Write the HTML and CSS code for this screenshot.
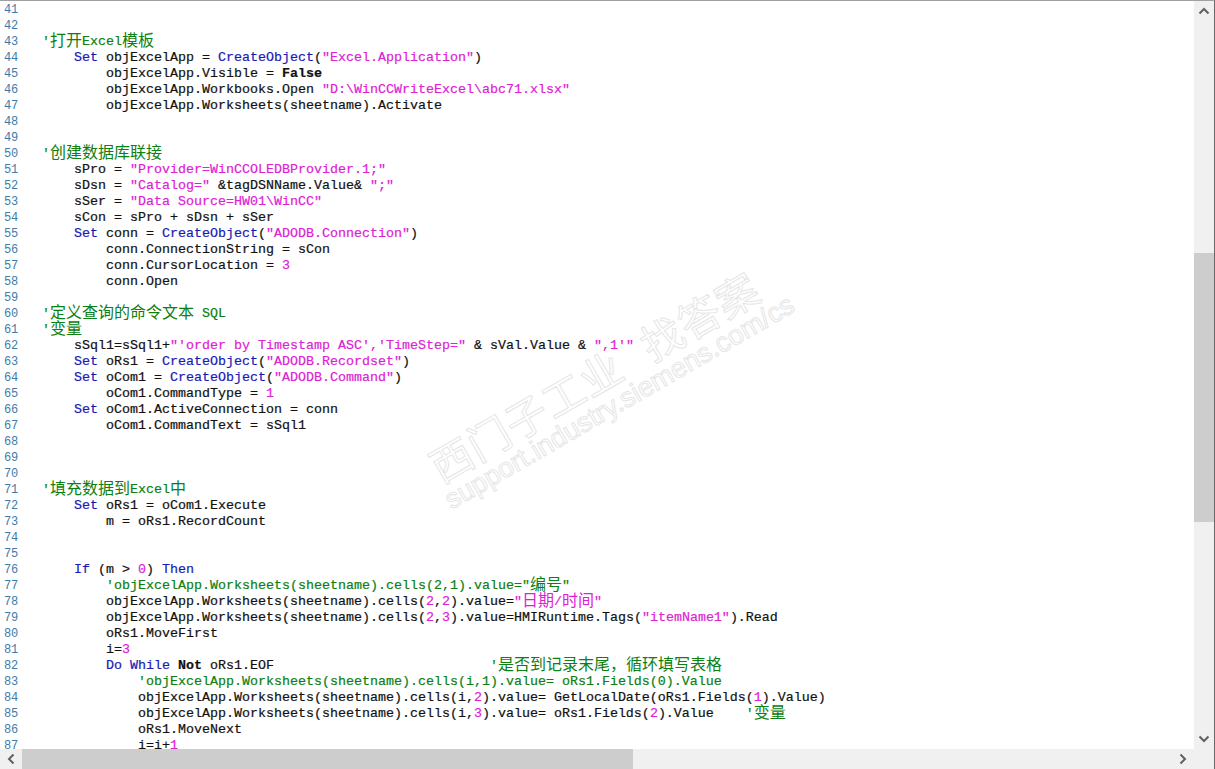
FILE: index.html
```html
<!DOCTYPE html>
<html lang="zh">
<head>
<meta charset="utf-8">
<title>Script</title>
<link rel="stylesheet" href="styles.css">
</head>
<body>
<div class="window">
  <div class="main">
    <div class="viewport">
      <div class="code">
        <div class="line"><span class="num">41</span><span class="src"></span></div>
        <div class="line"><span class="num">42</span><span class="src"></span></div>
        <div class="line"><span class="num">43</span><span class="src"><i class="c">'<b class="z">打开</b>Excel<b class="z">模板</b></i></span></div>
        <div class="line"><span class="num">44</span><span class="src">    <i class="k">Set</i> objExcelApp = <i class="k">CreateObject</i>(<i class="s">"Excel.Application"</i>)</span></div>
        <div class="line"><span class="num">45</span><span class="src">        objExcelApp.Visible = <strong>False</strong></span></div>
        <div class="line"><span class="num">46</span><span class="src">        objExcelApp.Workbooks.Open <i class="s">"D:\WinCCWriteExcel\abc71.xlsx"</i></span></div>
        <div class="line"><span class="num">47</span><span class="src">        objExcelApp.Worksheets(sheetname).Activate</span></div>
        <div class="line"><span class="num">48</span><span class="src"></span></div>
        <div class="line"><span class="num">49</span><span class="src"></span></div>
        <div class="line"><span class="num">50</span><span class="src"><i class="c">'<b class="z">创建数据库联接</b></i></span></div>
        <div class="line"><span class="num">51</span><span class="src">    sPro = <i class="s">"Provider=WinCCOLEDBProvider.1;"</i></span></div>
        <div class="line"><span class="num">52</span><span class="src">    sDsn = <i class="s">"Catalog="</i> &amp;tagDSNName.Value&amp; <i class="s">";"</i></span></div>
        <div class="line"><span class="num">53</span><span class="src">    sSer = <i class="s">"Data Source=HW01\WinCC"</i></span></div>
        <div class="line"><span class="num">54</span><span class="src">    sCon = sPro + sDsn + sSer</span></div>
        <div class="line"><span class="num">55</span><span class="src">    <i class="k">Set</i> conn = <i class="k">CreateObject</i>(<i class="s">"ADODB.Connection"</i>)</span></div>
        <div class="line"><span class="num">56</span><span class="src">        conn.ConnectionString = sCon</span></div>
        <div class="line"><span class="num">57</span><span class="src">        conn.CursorLocation = <i class="s">3</i></span></div>
        <div class="line"><span class="num">58</span><span class="src">        conn.Open</span></div>
        <div class="line"><span class="num">59</span><span class="src"></span></div>
        <div class="line"><span class="num">60</span><span class="src"><i class="c">'<b class="z">定义查询的命令文本</b> SQL</i></span></div>
        <div class="line"><span class="num">61</span><span class="src"><i class="c">'<b class="z">变量</b></i></span></div>
        <div class="line"><span class="num">62</span><span class="src">    sSql1=sSql1+<i class="s">"'order by Timestamp ASC','TimeStep="</i> &amp; sVal.Value &amp; <i class="s">",1'"</i></span></div>
        <div class="line"><span class="num">63</span><span class="src">    <i class="k">Set</i> oRs1 = <i class="k">CreateObject</i>(<i class="s">"ADODB.Recordset"</i>)</span></div>
        <div class="line"><span class="num">64</span><span class="src">    <i class="k">Set</i> oCom1 = <i class="k">CreateObject</i>(<i class="s">"ADODB.Command"</i>)</span></div>
        <div class="line"><span class="num">65</span><span class="src">        oCom1.CommandType = <i class="s">1</i></span></div>
        <div class="line"><span class="num">66</span><span class="src">    <i class="k">Set</i> oCom1.ActiveConnection = conn</span></div>
        <div class="line"><span class="num">67</span><span class="src">        oCom1.CommandText = sSql1</span></div>
        <div class="line"><span class="num">68</span><span class="src"></span></div>
        <div class="line"><span class="num">69</span><span class="src"></span></div>
        <div class="line"><span class="num">70</span><span class="src"></span></div>
        <div class="line"><span class="num">71</span><span class="src"><i class="c">'<b class="z">填充数据到</b>Excel<b class="z">中</b></i></span></div>
        <div class="line"><span class="num">72</span><span class="src">    <i class="k">Set</i> oRs1 = oCom1.Execute</span></div>
        <div class="line"><span class="num">73</span><span class="src">        m = oRs1.RecordCount</span></div>
        <div class="line"><span class="num">74</span><span class="src"></span></div>
        <div class="line"><span class="num">75</span><span class="src"></span></div>
        <div class="line"><span class="num">76</span><span class="src">    <i class="k">If</i> (m &gt; <i class="s">0</i>) <i class="k">Then</i></span></div>
        <div class="line"><span class="num">77</span><span class="src">        <i class="c">'objExcelApp.Worksheets(sheetname).cells(2,1).value="<b class="z">编号</b>"</i></span></div>
        <div class="line"><span class="num">78</span><span class="src">        objExcelApp.Worksheets(sheetname).cells(<i class="s">2</i>,<i class="s">2</i>).value=<i class="s">"<b class="z">日期</b>/<b class="z">时间</b>"</i></span></div>
        <div class="line"><span class="num">79</span><span class="src">        objExcelApp.Worksheets(sheetname).cells(<i class="s">2</i>,<i class="s">3</i>).value=HMIRuntime.Tags(<i class="s">"itemName1"</i>).Read</span></div>
        <div class="line"><span class="num">80</span><span class="src">        oRs1.MoveFirst</span></div>
        <div class="line"><span class="num">81</span><span class="src">        i=<i class="s">3</i></span></div>
        <div class="line"><span class="num">82</span><span class="src">        <i class="k">Do While</i> <strong>Not</strong> oRs1.EOF                           <i class="c">'<b class="z">是否到记录末尾，循环填写表格</b></i></span></div>
        <div class="line"><span class="num">83</span><span class="src">            <i class="c">'objExcelApp.Worksheets(sheetname).cells(i,1).value= oRs1.Fields(0).Value</i></span></div>
        <div class="line"><span class="num">84</span><span class="src">            objExcelApp.Worksheets(sheetname).cells(i,<i class="s">2</i>).value= GetLocalDate(oRs1.Fields(<i class="s">1</i>).Value)</span></div>
        <div class="line"><span class="num">85</span><span class="src">            objExcelApp.Worksheets(sheetname).cells(i,<i class="s">3</i>).value= oRs1.Fields(<i class="s">2</i>).Value    <i class="c">'<b class="z">变量</b></i></span></div>
        <div class="line"><span class="num">86</span><span class="src">            oRs1.MoveNext</span></div>
        <div class="line"><span class="num">87</span><span class="src">            i=i+<i class="s">1</i></span></div>
      </div>
      <div class="watermark">
        <div class="wm-cn"><span class="wm-a">西门子工业</span><span>找答案</span></div>
        <div class="wm-en">support.industry.siemens.com/cs</div>
      </div>
    </div>
    <div class="vbar">
      <svg class="arrow" viewBox="0 0 12 8" aria-hidden="true"><path d="M1.500 6.500 6 2l4.500 4.500"/></svg>
      <div class="vtrack"><div class="vthumb"></div></div>
      <svg class="arrow" viewBox="0 0 12 8" aria-hidden="true"><path d="M1.500 1.500 6 6l4.500-4.500"/></svg>
    </div>
  </div>
  <div class="hbar">
    <svg class="arrow-h" viewBox="0 0 8 12" aria-hidden="true"><path d="M6.500 1.500 2 6l4.500 4.500"/></svg>
    <div class="htrack"><div class="hthumb"></div></div>
    <svg class="arrow-h" viewBox="0 0 8 12" aria-hidden="true"><path d="M1.500 1.500 6 6l-4.500 4.500"/></svg>
    <div class="corner"></div>
  </div>
</div>
</body>
</html>
```
FILE: styles.css
```css
* { box-sizing: border-box; }
html, body { margin: 0; height: 100%; background: #fff; overflow: hidden; }
.window {
  width: 1215px;
  height: 769px;
  display: flex;
  flex-direction: column;
  border-top: 1px solid #a0a0a0;
  border-right: 1px solid #696969;
}
.main { flex: 1; min-height: 0; display: flex; }
.viewport { flex: 1; min-width: 0; position: relative; overflow: hidden; background: #fff; }
.code {
  font-family: "Liberation Mono", "Noto Sans CJK SC", monospace;
  font-size: 13.33px;
  line-height: 16px;
  color: #111;
  padding-top: 1px;
}
.line { display: flex; height: 16px; }
.num { width: 42px; padding-left: 4px; color: #3f7ba8; font-size: 12px; letter-spacing: -0.2px; flex: none; }
.src { white-space: pre; -webkit-text-stroke: 0.2px currentColor; }
.src i { font-style: normal; }
.k { color: #1a1ab4; }
.s { color: #dc22d4; }
.c { color: #0c8012; }
.z { font-family: "Noto Sans CJK SC", sans-serif; font-size: 16px; font-weight: 400; line-height: 0; vertical-align: -1px; -webkit-text-stroke: 0; }
strong { font-weight: 700; }
.watermark {
  position: absolute;
  left: 454px;
  top: 441px;
  width: 400px;
  transform: rotate(-30deg);
  transform-origin: 0 100%;
  color: transparent;
  -webkit-text-stroke: 1px #e6e6e6;
  pointer-events: none;
}
.wm-cn {
  font-family: "Noto Sans CJK SC", sans-serif;
  font-size: 42px;
  line-height: 44px;
  letter-spacing: 1px;
  white-space: nowrap;
  padding-left: 4px;
  display: flex;
  gap: 28px;
}
.wm-en {
  font-family: "Liberation Sans", sans-serif;
  font-size: 27.500px;
  line-height: 28px;
  white-space: nowrap;
}
.vbar { width: 20px; flex: none; background: #f0f0f0; display: flex; flex-direction: column; align-items: center; }
.arrow { width: 12px; height: 8px; margin: 6px 0; flex: none; fill: none; stroke: #606060; stroke-width: 2; }
.vtrack { flex: 1; width: 100%; padding-top: 232px; }
.vthumb { height: 269px; background: #cdcdcd; }
.hbar { height: 20px; flex: none; background: #f0f0f0; display: flex; align-items: center; }
.arrow-h { width: 8px; height: 12px; margin: 0 7px; flex: none; fill: none; stroke: #606060; stroke-width: 2; }
.htrack { flex: 1; align-self: stretch; }
.hthumb { height: 100%; width: 611px; background: #cdcdcd; }
.corner { width: 20px; flex: none; }
```
